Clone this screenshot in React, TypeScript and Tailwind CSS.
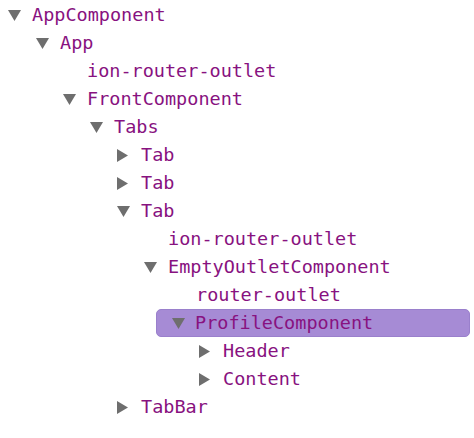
type Node = {
  label: string;
  level: number;
  arrow?: "down" | "right";
  selected?: boolean;
};

const rows: Node[] = [
  { label: "AppComponent", level: 0, arrow: "down" },
  { label: "App", level: 1, arrow: "down" },
  { label: "ion-router-outlet", level: 2 },
  { label: "FrontComponent", level: 2, arrow: "down" },
  { label: "Tabs", level: 3, arrow: "down" },
  { label: "Tab", level: 4, arrow: "right" },
  { label: "Tab", level: 4, arrow: "right" },
  { label: "Tab", level: 4, arrow: "down" },
  { label: "ion-router-outlet", level: 5 },
  { label: "EmptyOutletComponent", level: 5, arrow: "down" },
  { label: "router-outlet", level: 6 },
  { label: "ProfileComponent", level: 6, arrow: "down", selected: true },
  { label: "Header", level: 7, arrow: "right" },
  { label: "Content", level: 7, arrow: "right" },
  { label: "TabBar", level: 4, arrow: "right" },
];

// left offset of the arrow column per depth
const indent = [
  "pl-[8px]",
  "pl-[36px]",
  "pl-[63px]",
  "pl-[90px]",
  "pl-[117px]",
  "pl-[144px]",
  "pl-[172px]",
  "pl-[199px]",
];

function Arrow({ dir }: { dir?: "down" | "right" }) {
  if (!dir) return <span className="w-[24px] shrink-0" />;
  return (
    <span className="w-[24px] shrink-0 flex items-center">
      {dir === "down" ? (
        <svg width="13" height="11" viewBox="0 0 13 11">
          <polygon points="0,0 13,0 6.5,11" fill="#6e6e6e" />
        </svg>
      ) : (
        <svg width="11" height="13" viewBox="0 0 11 13">
          <polygon points="0,0 11,6.5 0,13" fill="#6e6e6e" />
        </svg>
      )}
    </span>
  );
}

export default function App() {
  return (
    <div
      className="w-[474px] h-[438px] bg-white pt-[1px] text-[18.5px] text-[#881280] overflow-hidden"
      style={{ fontFamily: '"DejaVu Sans Mono", monospace' }}
    >
      {rows.map((r, i) =>
        r.selected ? (
          <div key={i} className="h-[28px] pl-[156px] pr-[4px]">
            <div className="h-full flex items-center pl-[15px] rounded-[5px] bg-[#a68bd5] border border-[#9a80cc]">
              <Arrow dir={r.arrow} />
              <span className="leading-none -ml-[1px]">{r.label}</span>
            </div>
          </div>
        ) : (
          <div key={i} className={`h-[28px] flex items-center ${indent[r.level]}`}>
            <Arrow dir={r.arrow} />
            <span className="leading-none">{r.label}</span>
          </div>
        )
      )}
    </div>
  );
}
